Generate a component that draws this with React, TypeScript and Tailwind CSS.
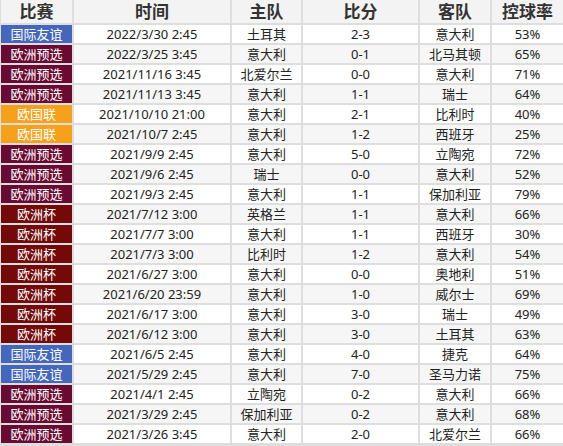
import React from 'react';

type Match = {
  comp: string;
  time: string;
  home: string;
  score: string;
  away: string;
  poss: string;
};

const compColors: Record<string, string> = {
  国际友谊: 'bg-[#4466bb]',
  欧洲预选: 'bg-[#6a0a32]',
  欧国联: 'bg-[#f5a11c]',
  欧洲杯: 'bg-[#730909]',
};

const matches: Match[] = [
  { comp: '国际友谊', time: '2022/3/30 2:45', home: '土耳其', score: '2-3', away: '意大利', poss: '53%' },
  { comp: '欧洲预选', time: '2022/3/25 3:45', home: '意大利', score: '0-1', away: '北马其顿', poss: '65%' },
  { comp: '欧洲预选', time: '2021/11/16 3:45', home: '北爱尔兰', score: '0-0', away: '意大利', poss: '71%' },
  { comp: '欧洲预选', time: '2021/11/13 3:45', home: '意大利', score: '1-1', away: '瑞士', poss: '64%' },
  { comp: '欧国联', time: '2021/10/10 21:00', home: '意大利', score: '2-1', away: '比利时', poss: '40%' },
  { comp: '欧国联', time: '2021/10/7 2:45', home: '意大利', score: '1-2', away: '西班牙', poss: '25%' },
  { comp: '欧洲预选', time: '2021/9/9 2:45', home: '意大利', score: '5-0', away: '立陶宛', poss: '72%' },
  { comp: '欧洲预选', time: '2021/9/6 2:45', home: '瑞士', score: '0-0', away: '意大利', poss: '52%' },
  { comp: '欧洲预选', time: '2021/9/3 2:45', home: '意大利', score: '1-1', away: '保加利亚', poss: '79%' },
  { comp: '欧洲杯', time: '2021/7/12 3:00', home: '英格兰', score: '1-1', away: '意大利', poss: '66%' },
  { comp: '欧洲杯', time: '2021/7/7 3:00', home: '意大利', score: '1-1', away: '西班牙', poss: '30%' },
  { comp: '欧洲杯', time: '2021/7/3 3:00', home: '比利时', score: '1-2', away: '意大利', poss: '54%' },
  { comp: '欧洲杯', time: '2021/6/27 3:00', home: '意大利', score: '0-0', away: '奥地利', poss: '51%' },
  { comp: '欧洲杯', time: '2021/6/20 23:59', home: '意大利', score: '1-0', away: '威尔士', poss: '69%' },
  { comp: '欧洲杯', time: '2021/6/17 3:00', home: '意大利', score: '3-0', away: '瑞士', poss: '49%' },
  { comp: '欧洲杯', time: '2021/6/12 3:00', home: '意大利', score: '3-0', away: '土耳其', poss: '63%' },
  { comp: '国际友谊', time: '2021/6/5 2:45', home: '意大利', score: '4-0', away: '捷克', poss: '64%' },
  { comp: '国际友谊', time: '2021/5/29 2:45', home: '意大利', score: '7-0', away: '圣马力诺', poss: '75%' },
  { comp: '欧洲预选', time: '2021/4/1 2:45', home: '立陶宛', score: '0-2', away: '意大利', poss: '66%' },
  { comp: '欧洲预选', time: '2021/3/29 2:45', home: '保加利亚', score: '0-2', away: '意大利', poss: '68%' },
  { comp: '欧洲预选', time: '2021/3/26 3:45', home: '意大利', score: '2-0', away: '北爱尔兰', poss: '66%' },
];

const headers = ['比赛', '时间', '主队', '比分', '客队', '控球率'];

const App = () => {
  return (
    <div
      className="w-[563px] h-[446px] bg-[#dedede] pl-[1px] pb-[3px]"
      style={{ fontFamily: '"Noto Sans", "Noto Sans CJK SC", sans-serif' }}
    >
      <div className="grid grid-cols-[71px_156px_69px_115px_70px_71px] grid-rows-[23px] auto-rows-[18px] gap-[2px]">
        {/* Header */}
        {headers.map((h) => (
          <div
            key={h}
            className="bg-[#f3f3f3] flex items-center justify-center text-[17px] font-bold text-[#333] leading-none"
          >
            {h}
          </div>
        ))}

        {/* Rows */}
        {matches.map((m, i) => {
          const rowBg = i % 2 === 0 ? 'bg-white' : 'bg-[#f6f6f6]';
          const cell = `${rowBg} flex items-center justify-center text-[13px] text-[#222] leading-none`;
          return (
            <React.Fragment key={m.time}>
              <div className={`${compColors[m.comp]} flex items-center justify-center text-[13px] text-white leading-none`}>
                {m.comp}
              </div>
              <div className={cell}>{m.time}</div>
              <div className={cell}>{m.home}</div>
              <div className={cell}>{m.score}</div>
              <div className={cell}>{m.away}</div>
              <div className={cell}>{m.poss}</div>
            </React.Fragment>
          );
        })}
      </div>
    </div>
  );
};

export default App;
